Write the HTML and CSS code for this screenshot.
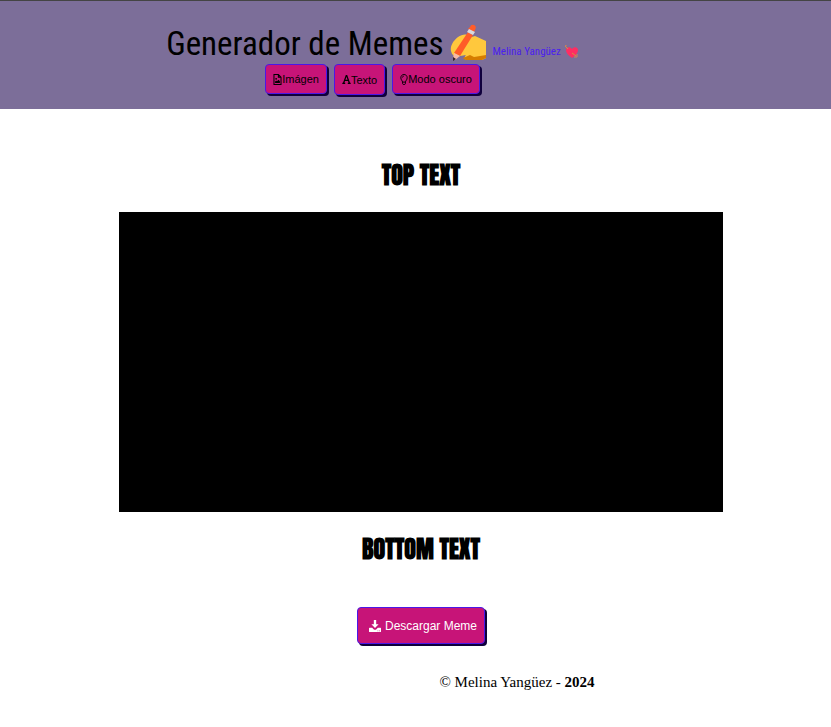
FILE: index.html
```html
<!DOCTYPE html>
<html lang="es">
<head>
<meta charset="utf-8">
<meta name="viewport" content="width=device-width, initial-scale=1">
<title>Generador de Memes</title>
<link rel="stylesheet" href="styles.css">
</head>
<body>
<header class="header">
  <div class="brand">
    <h1 class="title">Generador de Memes</h1>
    <svg class="hand" viewBox="0 0 37 37" aria-hidden="true">
      <path d="M1 27C0 22 3 17 8 13C11 11 15 10 17 11L15 15L25 12L36 17V34L32 36H18C14 36 14 33 16 31L10 32C6 34 2 32 1 27Z" fill="#ffc83d"/>
      <path d="M13 34L20 31L24 33L36 31V34L32 36H18Q14 36 13 34Z" fill="#d67d00"/>
      <path d="M18 8L23 11L10 32L4 29Z" fill="#ff5c28"/>
      <path d="M20 3Q21 0 24 1Q27 2 25 6L24 8L18 5Z" fill="#ff5c28"/>
      <path d="M19 5L25 8L23 11L17 8Z" fill="#d9d9dc"/>
      <path d="M4 29L10 32L5 36L3 35Z" fill="#f7b9a5"/>
      <path d="M3 33L6 35L3 37Z" fill="#32202b"/>
    </svg>
    <a class="author" href="#">Melina Yangüez</a>
    <svg class="heart" viewBox="0 0 14 14" aria-hidden="true">
      <path d="M7 13C3 10 1 8 1 5C1 2 5 1 7 4C9 1 13 2 13 5C13 8 11 10 7 13Z" fill="#ff2d62"/>
      <path d="M0 1L3 4M7 8L11 11" stroke="#d9903d"/>
      <path d="M0 2V0H2M9 12L12 12V9" fill="none" stroke="#d98055"/>
    </svg>
  </div>
  <nav class="tools" aria-label="Herramientas">
    <button class="button" type="button"><svg class="icon-file" viewBox="0 0 384 512" aria-hidden="true"><path d="M28 28H232L356 152V484H28ZM232 28V152H356" fill="none" stroke="currentColor" stroke-width="48"/><path d="M80 420V350L128 302L168 342L240 270L304 334V420Z"/><circle cx="128" cy="224" r="42"/></svg>Imágen</button>
    <button class="button button-text" type="button"><svg class="icon-a" viewBox="0 0 448 512" aria-hidden="true"><path d="M190 32H258L398 416H432V480H288V416H326L300 336H148L122 416H160V480H16V416H50ZM224 116L170 272H278Z" fill-rule="evenodd"/></svg>Texto</button>
    <button class="button" type="button"><svg class="icon-bulb" viewBox="0 0 352 512" aria-hidden="true"><path d="M108 376C108 310 28 280 28 174C28 86 90 24 176 24S324 86 324 174C324 280 244 310 244 376ZM108 376V440L140 488H212L244 440V376" fill="none" stroke="currentColor" stroke-width="44"/><path d="M96 176Q96 96 176 96" fill="none" stroke="currentColor" stroke-width="32"/></svg>Modo oscuro</button>
  </nav>
</header>
<main class="main">
  <h2 class="caption">TOP TEXT</h2>
  <div class="canvas" role="img" aria-label="Meme"></div>
  <h2 class="caption">BOTTOM TEXT</h2>
  <button class="button download" type="button"><svg class="icon-download" viewBox="0 0 512 512" aria-hidden="true"><path d="M206 0H306V180H410L256 336L102 180H206Z"/><path fill-rule="evenodd" d="M24 330H136L196 392Q256 440 316 392L376 330H488Q512 330 512 354V488Q512 512 488 512H24Q0 512 0 488V354Q0 330 24 330ZM364 444V476H396V444ZM432 444V476H464V444Z"/></svg>Descargar Meme</button>
</main>
<footer class="footer">© Melina Yangüez - <b>2024</b></footer>
</body>
</html>
```
FILE: styles.css
```css
* {
  box-sizing: border-box;
}

body {
  margin: 0;
  background: #fff;
  color: #000;
  font-family: "Liberation Serif", serif;
}

.header {
  display: flex;
  flex-direction: column;
  align-items: center;
  padding: 24px 86px 14px 0;
  border-top: 1px solid #444;
  background: #7c6e99;
}

.brand {
  display: flex;
  align-items: flex-end;
  height: 36px;
  font-family: "Roboto Condensed", Roboto, sans-serif;
}

.title {
  margin: 0;
  font-size: 33px;
  font-weight: 400;
  line-height: 34px;
}

.hand {
  width: 37px;
  height: 37px;
  margin-left: 6px;
}

.author {
  margin: 0 4px 0 6px;
  color: #4a20ee;
  font-size: 11px;
  line-height: 18px;
  text-decoration: none;
}

.heart {
  width: 14px;
  height: 14px;
  margin-bottom: 2px;
}

.tools {
  display: flex;
  align-items: flex-start;
  gap: 7px;
  margin-top: 3px;
}

.button {
  display: flex;
  align-items: center;
  justify-content: center;
  height: 30px;
  padding: 0 7px;
  border: 1px solid #4a18e8;
  border-radius: 4px;
  background: #c71478;
  box-shadow: 2px 2px 0 #10003c;
  color: #000;
  font-family: "Liberation Sans", Arial, sans-serif;
  font-size: 11px;
  line-height: 14px;
  white-space: nowrap;
}

.button-text {
  height: 31px;
}

.button svg {
  flex: none;
  fill: currentColor;
}

.icon-file,
.icon-a {
  width: 9px;
  height: 11px;
}

.icon-bulb {
  width: 8px;
  height: 11px;
}

.main {
  display: flex;
  flex-direction: column;
  align-items: center;
  padding: 48px 13% 0 119px;
}

.caption {
  margin: 0;
  padding: 4px 0;
  font-family: Anton, Impact, sans-serif;
  font-size: 24px;
  font-weight: 900;
  line-height: 28px;
}

.canvas {
  width: 100%;
  height: 300px;
  margin: 19px 0;
  background: #000;
}

.download {
  height: 37px;
  margin-top: 40px;
  padding: 0 7px 0 11px;
  gap: 4px;
  color: #fff;
  font-size: 12px;
}

.icon-download {
  width: 12px;
  height: 12px;
}

.footer {
  margin-top: 29px;
  padding-left: 203px;
  font-size: 15px;
  line-height: 18px;
  text-align: center;
}
```
